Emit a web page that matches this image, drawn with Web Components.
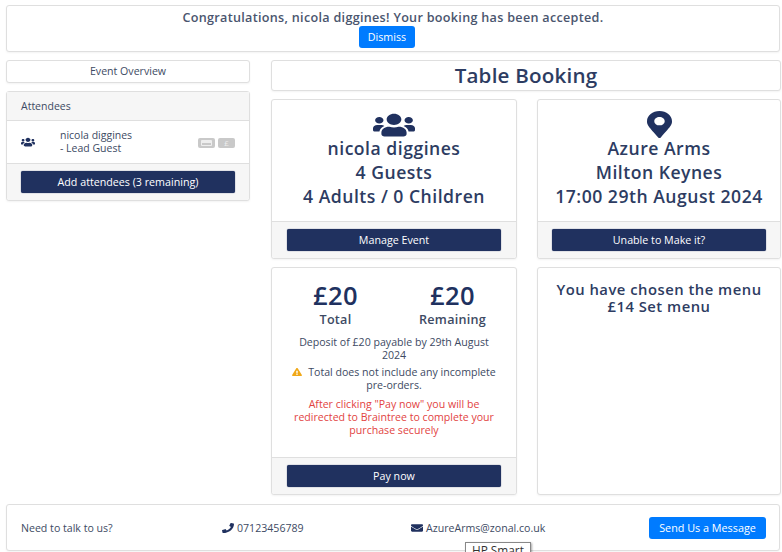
<!DOCTYPE html>
<html lang="en"><head><meta charset="utf-8"><title>Table Booking</title>
<style>
html,body{margin:0;height:552px;overflow:hidden;background:#fff}
body{font-family:"Open Sans","Liberation Sans",sans-serif;color:#3d4a63;box-sizing:border-box;padding:5px 2px 0 6px;position:relative}
</style></head><body>
<booking-page></booking-page>
<template id="ic-users"><svg viewBox="0 0 640 512" preserveAspectRatio="none"><path d="M96 224c35.3 0 64-28.7 64-64s-28.7-64-64-64-64 28.7-64 64 28.7 64 64 64zm448 0c35.3 0 64-28.7 64-64s-28.7-64-64-64-64 28.7-64 64 28.7 64 64 64zm32 32h-64c-17.6 0-33.5 7.1-45.1 18.6 40.3 22.1 68.9 62 75.1 109.4h66c17.7 0 32-14.3 32-32v-32c0-35.3-28.7-64-64-64zm-256 0c61.9 0 112-50.1 112-112S381.9 32 320 32 208 82.1 208 144s50.1 112 112 112zm76.8 32h-8.3c-20.8 10-43.9 16-68.5 16s-47.6-6-68.5-16h-8.3C179.6 288 128 339.6 128 403.2V432c0 26.5 21.5 48 48 48h288c26.5 0 48-21.5 48-48v-28.8c0-63.6-51.6-115.2-115.2-115.2zm-223.7-13.4C161.5 263.1 145.6 256 128 256H64c-35.3 0-64 28.7-64 64v32c0 17.7 14.3 32 32 32h65.9c6.3-47.4 34.9-87.3 75.2-109.4z"/></svg></template>
<template id="ic-marker"><svg viewBox="0 0 384 512" preserveAspectRatio="none"><path d="M172.268 501.67C26.97 291.031 0 269.413 0 192 0 85.961 85.961 0 192 0s192 85.961 192 192c0 77.413-26.97 99.031-172.268 309.67-9.535 13.774-29.93 13.773-39.464 0zM192 272c44.183 0 80-35.817 80-80s-35.817-80-80-80-80 35.817-80 80 35.817 80 80 80z"/></svg></template>
<template id="ic-phone"><svg viewBox="0 0 512 512" preserveAspectRatio="none"><path d="M493.4 24.6l-104-24c-11.3-2.6-22.9 3.3-27.5 13.9l-48 112c-4.2 9.8-1.4 21.3 6.9 28l60.6 49.6c-36 76.7-98.9 140.5-177.2 177.2l-49.6-60.6c-6.8-8.3-18.2-11.1-28-6.9l-112 48C3.9 366.5-2 378.1.6 389.4l24 104C27.1 504.2 36.7 512 48 512c256.1 0 464-207.5 464-464 0-11.2-7.7-20.9-18.6-23.4z"/></svg></template>
<template id="ic-envelope"><svg viewBox="0 0 512 512" preserveAspectRatio="none"><path d="M502.3 190.8c3.9-3.1 9.7-.2 9.7 4.7V400c0 26.5-21.5 48-48 48H48c-26.5 0-48-21.5-48-48V195.6c0-5 5.7-7.8 9.7-4.7 22.4 17.4 52.1 39.5 154.1 113.6 21.1 15.4 56.7 47.8 92.2 47.6 35.7.3 72-32.8 92.3-47.6 102-74.1 131.6-96.3 154-113.7zM256 320c23.2.4 56.6-29.2 73.4-41.4 132.7-96.3 142.8-104.7 173.4-128.7 5.8-4.5 9.2-11.5 9.2-18.9v-19c0-26.5-21.5-48-48-48H48C21.5 64 0 85.5 0 112v19c0 7.4 3.4 14.3 9.2 18.9 30.6 23.9 40.7 32.4 173.4 128.7 16.8 12.2 50.2 41.8 73.4 41.4z"/></svg></template>
<template id="ic-warn"><svg viewBox="0 0 576 512" preserveAspectRatio="none"><path d="M569.517 440.013C587.975 472.007 564.806 512 527.94 512H48.054c-36.937 0-59.999-40.055-41.577-71.987L246.423 23.985c18.467-32.009 64.72-31.951 83.154 0l239.94 416.028zM288 354c-25.405 0-46 20.595-46 46s20.595 46 46 46 46-20.595 46-46-20.595-46-46-46zm-43.673-165.346l7.418 136c.347 6.364 5.609 11.346 11.982 11.346h48.546c6.373 0 11.635-4.982 11.982-11.346l7.418-136c.375-6.874-5.098-12.654-11.982-12.654h-63.383c-6.884 0-12.356 5.78-11.981 12.654z"/></svg></template>
<script>
class XIcon extends HTMLElement{
  constructor(){super();const s=this.attachShadow({mode:"open"});
    s.innerHTML='<style>:host{display:inline-flex;line-height:0;color:inherit}svg{height:100%;width:100%;display:block;fill:currentColor}</style>';
    s.append(document.getElementById("ic-"+this.getAttribute("name")).content.cloneNode(true));}
}
class XBtn extends HTMLElement{
  constructor(){super();this.attachShadow({mode:"open"}).innerHTML=`<style>
    :host{display:flex;align-items:center;justify-content:center;box-sizing:border-box;height:22px;background:#20315f;color:#fff;border-radius:2px;font-size:10.7px;box-shadow:0 0 1px #20315f}
    :host([blue]){background:#007bff;border-radius:3px;box-shadow:none}
  </style><slot></slot>`;}
}
class XCard extends HTMLElement{
  constructor(){super();this.attachShadow({mode:"open"}).innerHTML=`<style>
    :host{display:flex;flex-direction:column;box-sizing:border-box;background:#fff;border:1px solid #dfdfdf;border-radius:3px;box-shadow:0 1px 2px rgba(0,0,0,.05);min-width:0}
    .b{flex:1;min-height:0;display:flex;flex-direction:column}
    :host([center]) .b{justify-content:center;padding-bottom:2px}
    .f{flex:none;background:#f6f6f6;border-top:1px solid #dfdfdf;border-radius:0 0 3px 3px}
    .f.none{display:none}
    .f ::slotted(*){margin:7px var(--fm,14px)}
  </style><div class="b"><slot></slot></div><div class="f"><slot name="footer"></slot></div>`;}
  connectedCallback(){if(!this.querySelector('[slot=footer]'))this.shadowRoot.querySelector('.f').classList.add('none');}
}
class InfoCard extends HTMLElement{
  constructor(){super();const icon=this.getAttribute("icon"),w=this.getAttribute("iw"),h=this.getAttribute("ih"),btn=this.getAttribute("button");
    const lines=[...this.querySelectorAll('span')].map(e=>e.textContent);
    this.attachShadow({mode:"open"}).innerHTML=`<style>
    :host{display:block;height:160px}
    x-card{height:100%}
    .c{display:flex;flex-direction:column;align-items:center;padding-top:11px;color:#2d3c62;font-size:17.6px;font-weight:600;letter-spacing:.5px;line-height:24px}
    .ic{height:27px;margin-bottom:-2px;display:flex;align-items:center}
    x-icon{height:${h}px;width:${w}px;color:#20315f}
    .l{white-space:nowrap}
    </style><x-card><div class="c"><div class="ic"><x-icon name="${icon}"></x-icon></div>${lines.map(t=>`<div class="l">${t}</div>`).join("")}</div><x-btn slot="footer">${btn}</x-btn></x-card>`;}
}
class PayCard extends HTMLElement{
  constructor(){super();this.attachShadow({mode:"open"}).innerHTML=`<style>
    :host{display:block;height:228px}
    x-card{height:100%}
    .c{padding:12px 18px 0;text-align:center;font-size:10.6px;line-height:13px}
    .t{display:grid;grid-template-columns:1fr 1fr;color:#20315f;margin:0 -13px 7px}
    .a{font-size:25.5px;font-weight:600;letter-spacing:.5px;line-height:30px}
    .n{font-size:12.6px;font-weight:600;letter-spacing:.25px;line-height:19px;color:#3d4a63}
    p{margin:0 0 4px}
    x-icon{height:8px;width:10px;color:#f0a818;margin-right:6px}
    .r{color:#e2433f;margin-top:6px}
    </style><x-card><div class="c">
      <div class="t"><div><div class="a">£20</div><div class="n">Total</div></div><div><div class="a">£20</div><div class="n">Remaining</div></div></div>
      <p>Deposit of £20 payable by 29th August 2024</p>
      <p><x-icon name="warn"></x-icon>Total does not include any incomplete pre-orders.</p>
      <p class="r">After clicking "Pay now" you will be redirected to Braintree to complete your purchase securely</p>
    </div><x-btn slot="footer">Pay now</x-btn></x-card>`;}
}
class AttendeeCard extends HTMLElement{
  constructor(){super();this.attachShadow({mode:"open"}).innerHTML=`<style>
    :host{display:block;height:110px}
    x-card{height:100%}
    .h{height:29px;box-sizing:border-box;background:#f6f6f6;border-bottom:1px solid #dfdfdf;padding:0 14px;display:flex;align-items:center;font-size:10.5px}
    .r{flex:1;display:flex;align-items:center;padding:0 14px;font-size:10.5px;line-height:13.5px}
    x-icon{width:14px;height:10px;color:#20315f}
    .n{margin-left:25px;flex:1}
    .bd{display:flex;gap:3px;margin-top:2px}
    .g{width:17px;height:10px;background:#c9c9c9;border-radius:2px;display:flex;align-items:center;justify-content:center;color:#eee;font-size:8px;line-height:10px}
    .g i{display:block;width:11px;height:6px;border:1px solid #eee;border-top-width:3px;border-radius:1px;box-sizing:border-box}
    </style><x-card><div class="h">Attendees</div>
    <div class="r"><x-icon name="users"></x-icon><div class="n">nicola diggines<br>- Lead Guest</div><div class="bd"><div class="g"><i></i></div><div class="g">£</div></div></div>
    <x-btn slot="footer">Add attendees (3 remaining)</x-btn></x-card>`;}
}
class BookingPage extends HTMLElement{
  constructor(){super();this.attachShadow({mode:"open"}).innerHTML=`<style>
    :host{display:block}
    .banner{height:47px;text-align:center;font-size:12.6px;font-weight:600;letter-spacing:.3px;line-height:16px;padding-top:4px;box-sizing:border-box;color:#4a556e}
    .banner x-btn{width:56px;height:22px;font-weight:400;letter-spacing:0;font-size:10.7px;align-self:flex-start;margin-left:352px}
    .main{display:grid;grid-template-columns:244px 510px;column-gap:21px;margin-top:8px}
    .ov{height:23px;font-size:10.6px;margin-bottom:8px;text-align:center}
    .title{height:31px;font-size:20.6px;font-weight:600;letter-spacing:.2px;color:#2d3c62;margin-bottom:8px;text-align:center}
    .grid{display:grid;grid-template-columns:246px 244px;column-gap:20px;row-gap:8px}
    .i1{--fm:15px}
    .menu{height:228px}
    .menu div.m{padding-top:13px;text-align:center;font-size:14.8px;font-weight:600;letter-spacing:.5px;line-height:16.5px;color:#2d3c62}
    .foot{height:47px;margin-top:9px}
    .foot .row{height:45px;display:grid;grid-template-columns:201px 189px 238px 1fr;align-items:center;padding:0 13px 0 14px;font-size:10.6px}
    .foot span{display:inline-flex;align-items:center;gap:3px}
    .foot x-icon{height:10px;width:12px;color:#20315f}
    .foot x-btn{height:22px;font-size:10.8px}
    .tip{position:absolute;left:465px;top:542px;height:14px;padding:0 6px;border:1px solid #888;background:#fff;box-shadow:1px 1px 2px rgba(0,0,0,.35);font-size:11.8px;line-height:14px;color:#333;white-space:nowrap}
    </style>
    <x-card class="banner"><div>Congratulations, nicola diggines! Your booking has been accepted.</div><x-btn blue>Dismiss</x-btn></x-card>
    <div class="main">
      <div><x-card class="ov" center><div>Event Overview</div></x-card><attendee-card></attendee-card></div>
      <div>
        <x-card class="title" center><div>Table Booking</div></x-card>
        <div class="grid">
          <info-card class="i1" icon="users" iw="42" ih="26" button="Manage Event"><span>nicola diggines</span><span>4 Guests</span><span>4 Adults / 0 Children</span></info-card>
          <info-card icon="marker" iw="25" ih="27" button="Unable to Make it?"><span>Azure Arms</span><span>Milton Keynes</span><span>17:00 29th August 2024</span></info-card>
          <pay-card class="i1"></pay-card>
          <x-card class="menu"><div class="m">You have chosen the menu<br>£14 Set menu</div></x-card>
        </div>
      </div>
    </div>
    <x-card class="foot"><div class="row"><div>Need to talk to us?</div><span><x-icon name="phone"></x-icon>07123456789</span><span><x-icon name="envelope"></x-icon>AzureArms@zonal.co.uk</span><x-btn blue>Send Us a Message</x-btn></div></x-card>
    <div class="tip">HP Smart</div>`;}
}
customElements.define("x-icon",XIcon);
customElements.define("x-btn",XBtn);
customElements.define("x-card",XCard);
customElements.define("info-card",InfoCard);
customElements.define("pay-card",PayCard);
customElements.define("attendee-card",AttendeeCard);
customElements.define("booking-page",BookingPage);
</script>
</body></html>
